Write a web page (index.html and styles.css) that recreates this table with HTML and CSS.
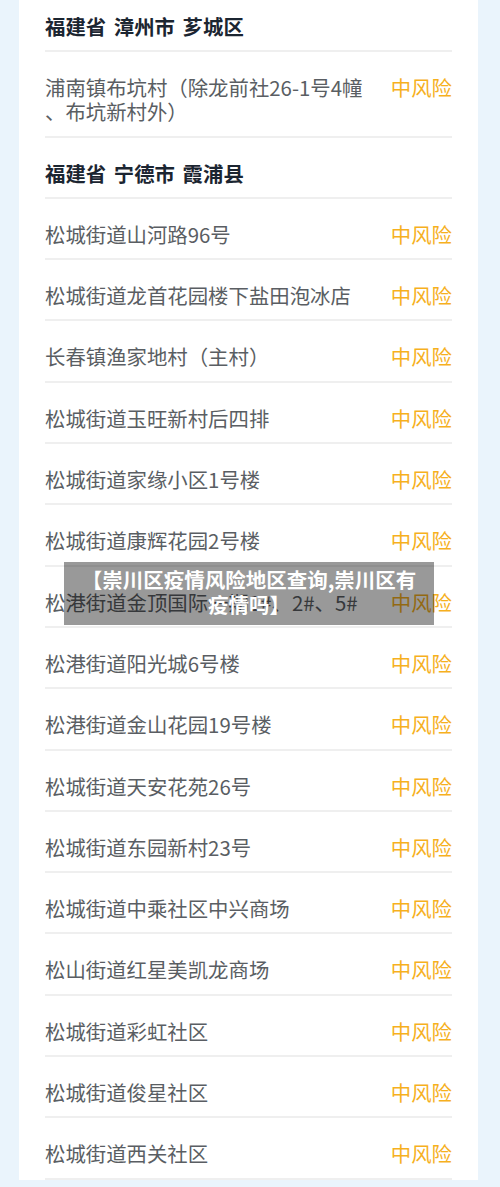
FILE: index.html
```html
<!DOCTYPE html>
<html lang="zh-CN">
<head>
  <meta charset="UTF-8" />
  <meta name="viewport" content="width=device-width, initial-scale=1.0"/>
  <title>崇川区疫情风险地区查询</title>
  <link rel="stylesheet" href="styles.css">
</head>
<body>

  <!-- risk list card -->
  <div class="card">
    <div class="row area">福建省 漳州市 芗城区</div>
    <div class="row">
      <span class="name">浦南镇布坑村（除龙前社26-1号4幢<br>、布坑新村外）</span>
      <span class="level">中风险</span>
    </div>

    <div class="row area">福建省 宁德市 霞浦县</div>
    <div class="row"><span class="name">松城街道山河路96号</span><span class="level">中风险</span></div>
    <div class="row"><span class="name">松城街道龙首花园楼下盐田泡冰店</span><span class="level">中风险</span></div>
    <div class="row"><span class="name">长春镇渔家地村（主村）</span><span class="level">中风险</span></div>
    <div class="row"><span class="name">松城街道玉旺新村后四排</span><span class="level">中风险</span></div>
    <div class="row"><span class="name">松城街道家缘小区1号楼</span><span class="level">中风险</span></div>
    <div class="row"><span class="name">松城街道康辉花园2号楼</span><span class="level">中风险</span></div>
    <div class="row"><span class="name">松港街道金顶国际一期1#、2#、5#</span><span class="level">中风险</span></div>
    <div class="row"><span class="name">松港街道阳光城6号楼</span><span class="level">中风险</span></div>
    <div class="row"><span class="name">松港街道金山花园19号楼</span><span class="level">中风险</span></div>
    <div class="row"><span class="name">松城街道天安花苑26号</span><span class="level">中风险</span></div>
    <div class="row"><span class="name">松城街道东园新村23号</span><span class="level">中风险</span></div>
    <div class="row"><span class="name">松城街道中乘社区中兴商场</span><span class="level">中风险</span></div>
    <div class="row"><span class="name">松山街道红星美凯龙商场</span><span class="level">中风险</span></div>
    <div class="row"><span class="name">松城街道彩虹社区</span><span class="level">中风险</span></div>
    <div class="row"><span class="name">松城街道俊星社区</span><span class="level">中风险</span></div>
    <div class="row"><span class="name">松城街道西关社区</span><span class="level">中风险</span></div>
  </div>

  <!-- title overlay -->
  <div class="banner">【崇川区疫情风险地区查询,崇川区有疫情吗】</div>

</body>
</html>
```

FILE: styles.css
```css
* { box-sizing: border-box; }
body {
  margin: 0;
  padding: 0;
  font-family: "Noto Sans CJK SC", "Noto Sans", sans-serif;
  background: #eaf4fc;
  height: 1187px;
  overflow: hidden;
  position: relative;
}
.card {
  background: #fff;
  margin: -9px 22px 0 19px;
  padding: 0 26px;
}
.row {
  display: flex;
  justify-content: space-between;
  align-items: flex-start;
  padding: 23px 0 12.3px;
  border-bottom: 2px solid #efefef;
  font-size: 20.4px;
  line-height: 24px;
}
.area {
  color: #1b2531;
  font-weight: bold;
  word-spacing: 3px;
}
.name {
  color: #5a5e63;
  white-space: nowrap;
}
.level {
  color: #f6b01e;
  white-space: nowrap;
}
.banner {
  position: absolute;
  left: 64px;
  top: 562px;
  width: 370px;
  height: 63px;
  padding: 5px 12px 0;
  background: rgba(0, 0, 0, 0.4);
  color: #fff;
  font-size: 20.5px;
  font-weight: bold;
  line-height: 25px;
  text-align: center;
}
```
